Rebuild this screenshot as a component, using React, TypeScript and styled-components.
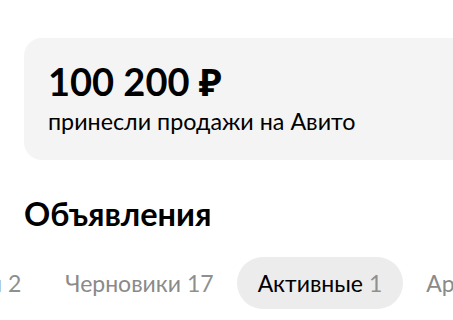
import React, { useLayoutEffect, useRef } from "react";
import styled, { createGlobalStyle } from "styled-components";

const Global = createGlobalStyle`
  html, body { margin: 0; padding: 0; background: #fff; }
  body { font-family: Lato, "Noto Sans", "Liberation Sans", sans-serif; color: #000; overflow: hidden; }
`;

const Page = styled.div`
  width: 453px;
  height: 320px;
  overflow: hidden;
  padding-top: 38px;
  box-sizing: border-box;
`;

const Card = styled.section`
  margin-left: 24px;
  margin-right: -40px;
  height: 122px;
  box-sizing: border-box;
  background: #f4f4f4;
  border-radius: 18px;
  padding: 20px 24px 0 24px;
`;

const Amount = styled.div`
  font-size: 38px;
  font-weight: 700;
  line-height: 46px;
`;

const Caption = styled.div`
  font-size: 23.3px;
  font-weight: 400;
  line-height: 30px;
  margin-top: 2px;
`;

const Heading = styled.h2`
  margin: 34px 0 0 24px;
  font-size: 32.5px;
  font-weight: 700;
  line-height: 40px;
`;

const Scroller = styled.div`
  margin-top: 23px;
  overflow-x: auto;
  scrollbar-width: none;
  &::-webkit-scrollbar { display: none; }
`;

const Track = styled.div`
  display: flex;
  gap: 2px;
  width: max-content;
  padding: 0 24px;
`;

const Tab = styled.div<{ $active?: boolean }>`
  height: 52px;
  display: flex;
  align-items: center;
  padding: 0 21px;
  border-radius: 26px;
  background: ${(p) => (p.$active ? "#ececec" : "transparent")};
  color: ${(p) => (p.$active ? "#000" : "#8a8a8a")};
  font-size: 23px;
  white-space: nowrap;
`;

const Count = styled.span`
  color: #8f8f8f;
  margin-left: 6px;
`;

const tabs = [
  { label: "Ждут действий", count: 2 },
  { label: "Черновики", count: 17 },
  { label: "Активные", count: 1, active: true },
  { label: "Архив", count: 5 },
];

export default function App() {
  const scroller = useRef<HTMLDivElement>(null);
  const second = useRef<HTMLDivElement>(null);
  useLayoutEffect(() => {
    if (scroller.current && second.current) {
      scroller.current.scrollLeft = second.current.offsetLeft - 44;
    }
  }, []);
  return (
    <>
      <Global />
      <Page>
        <Card>
          <Amount>100 200 ₽</Amount>
          <Caption>принесли продажи на Авито</Caption>
        </Card>
        <Heading>Объявления</Heading>
        <Scroller ref={scroller}>
          <Track>
            {tabs.map((t, i) => (
              <Tab key={t.label} $active={t.active} ref={i === 1 ? second : undefined}>
                {t.label}
                <Count>{t.count}</Count>
              </Tab>
            ))}
          </Track>
        </Scroller>
      </Page>
    </>
  );
}
